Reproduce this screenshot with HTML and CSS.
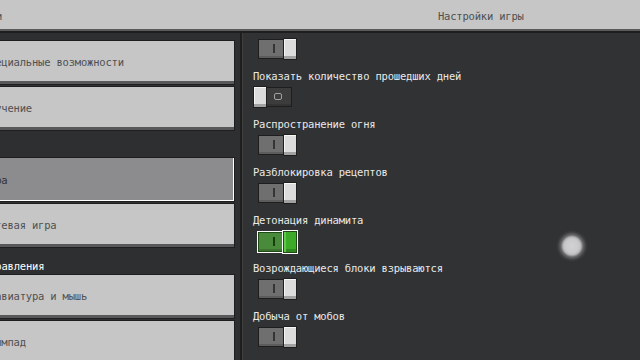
FILE: index.html
```html
<!DOCTYPE html>
<html lang="ru">
<head>
<meta charset="utf-8">
<title>Настройки игры</title>
<link rel="stylesheet" href="styles.css">
</head>
<body>
<div class="screen">
  <header class="topbar">
    <div class="topbar-left"><span class="back-title">Настройки</span></div>
    <div class="topbar-title">Настройки игры</div>
  </header>
  <div class="main">
    <nav class="sidebar">
      <div class="nav-list">
        <button class="nav-btn">Специальные возможности</button>
        <button class="nav-btn">Обучение</button>
        <div class="nav-section">Общие</div>
        <button class="nav-btn is-selected">Игра</button>
        <button class="nav-btn">Сетевая игра</button>
        <div class="nav-section">Элементы управления</div>
        <button class="nav-btn">Клавиатура и мышь</button>
        <button class="nav-btn">Геймпад</button>
      </div>
    </nav>
    <section class="content">
      <div class="options">
        <div class="option option-first">
          <div class="toggle is-on"><span class="toggle-track"><span class="mark-on"></span></span><span class="toggle-knob"></span></div>
        </div>
        <div class="option">
          <div class="option-label">Показать количество прошедших дней</div>
          <div class="toggle is-off"><span class="toggle-track"><span class="mark-off"></span></span><span class="toggle-knob"></span></div>
        </div>
        <div class="option">
          <div class="option-label">Распространение огня</div>
          <div class="toggle is-on"><span class="toggle-track"><span class="mark-on"></span></span><span class="toggle-knob"></span></div>
        </div>
        <div class="option">
          <div class="option-label">Разблокировка рецептов</div>
          <div class="toggle is-on"><span class="toggle-track"><span class="mark-on"></span></span><span class="toggle-knob"></span></div>
        </div>
        <div class="option">
          <div class="option-label">Детонация динамита</div>
          <div class="toggle is-on is-focused"><span class="toggle-track"><span class="mark-on"></span></span><span class="toggle-knob"></span></div>
        </div>
        <div class="option">
          <div class="option-label">Возрождающиеся блоки взрываются</div>
          <div class="toggle is-on"><span class="toggle-track"><span class="mark-on"></span></span><span class="toggle-knob"></span></div>
        </div>
        <div class="option">
          <div class="option-label">Добыча от мобов</div>
          <div class="toggle is-on"><span class="toggle-track"><span class="mark-on"></span></span><span class="toggle-knob"></span></div>
        </div>
      </div>
    </section>
  </div>
  <div class="cursor"></div>
</div>
</body>
</html>
```

FILE: styles.css
```css
html, body {
  margin: 0;
  padding: 0;
}

body {
  width: 640px;
  height: 360px;
  overflow: hidden;
  background: #313233;
  font-family: "DejaVu Sans Mono", "Liberation Mono", monospace;
  font-size: 10.5px;
  letter-spacing: -0.2px;
}

.screen {
  position: relative;
  width: 640px;
  height: 360px;
  overflow: hidden;
  display: flex;
  flex-direction: column;
}

/* ---------- top bar ---------- */
.topbar {
  flex: 0 0 auto;
  height: 33px;
  box-sizing: border-box;
  display: flex;
  background: #c6c6c6;
  border-bottom: 2px solid #1e1e1f;
  box-shadow: inset 0 -2px 0 #5a5a5b;
  color: #4f4f50;
  padding-top: 10px;
  line-height: 12px;
}

.topbar-left {
  width: 240px;
  overflow: hidden;
  white-space: nowrap;
}

.back-title {
  display: inline-block;
  margin-left: -53px;
}

.topbar-title {
  padding-left: 198px;
  white-space: nowrap;
}

/* ---------- main ---------- */
.main {
  flex: 1 1 auto;
  display: flex;
  min-height: 0;
}

.sidebar {
  width: 240px;
  flex: 0 0 240px;
  overflow: hidden;
  background: #2e2f30;
}

.nav-list {
  width: 335px;
  margin-left: -100px;
  padding-top: 7px;
  display: flex;
  flex-direction: column;
  gap: 1px;
}

.nav-btn {
  display: block;
  width: 100%;
  height: 45px;
  flex: 0 0 45px;
  margin: 0;
  box-sizing: border-box;
  border: 1px solid #1e1e1f;
  background: #c6c6c6;
  box-shadow: inset 0 -3px 0 #58585a;
  padding: 0 0 1px 82px;
  text-align: left;
  font: inherit;
  letter-spacing: inherit;
  line-height: 16px;
  color: #505051;
  white-space: nowrap;
}

.nav-btn.is-selected {
  background: #8c8b8d;
  box-shadow: inset -1px -1px 0 #ffffff;
  padding-bottom: 0;
  color: #323233;
}

.nav-section {
  height: 24px;
  flex: 0 0 24px;
  box-sizing: border-box;
  padding: 11px 0 0 28px;
  line-height: 13px;
  color: #ffffff;
  white-space: nowrap;
}

/* ---------- content ---------- */
.content {
  flex: 1 1 auto;
  overflow: hidden;
  border-left: 2px solid #1e1e1f;
  box-shadow: inset 1px 0 0 #3f3f40;
  padding-left: 11px;
  background: #313233;
}

.options {
  padding-top: 5px;
  display: flex;
  flex-direction: column;
}

.option {
  height: 48px;
  box-sizing: border-box;
}

.option-first {
  height: 30px;
}

.option-first .toggle {
  margin-top: 0;
}

.option-label {
  height: 16px;
  line-height: 16px;
  color: #e9e9e9;
  white-space: nowrap;
}

/* ---------- toggle ---------- */
.toggle {
  position: relative;
  width: 44px;
  height: 22px;
  margin-top: 2px;
}

.toggle-track {
  position: absolute;
  left: 5px;
  top: 1px;
  width: 34px;
  height: 20px;
  box-sizing: border-box;
  border: 1px solid #1e1e1f;
  background: #6f6f70;
  box-shadow: inset 0 -2px 0 #5c5c5d;
}

.toggle-knob {
  position: absolute;
  top: 0;
  width: 14px;
  height: 22px;
  box-sizing: border-box;
  border: 1px solid #1e1e1f;
  background: #dcdcdd;
  box-shadow: inset 0 -3px 0 #a2a2a3, inset 1px 1px 0 #f6f6f6;
}

.is-on .toggle-knob {
  left: 30px;
}

.is-off .toggle-knob {
  left: 0;
}

.is-off .toggle-track {
  background: #3c3c3d;
  box-shadow: inset 0 -2px 0 #333334;
}

.mark-on {
  position: absolute;
  left: 14px;
  top: 4px;
  width: 2px;
  height: 9px;
  background: #353536;
}

.mark-off {
  position: absolute;
  left: 15px;
  top: 5px;
  width: 8px;
  height: 7px;
  box-sizing: border-box;
  border: 1px solid #a2a2a3;
  border-radius: 2px;
}

/* focused (green) toggle */
.is-focused {
  margin-top: 3px;
}

.is-focused .toggle-track {
  background: #4a8a3b;
  border-color: #1f4a16;
  box-shadow: 0 0 0 1px #ffffff, inset 0 -2px 0 #3d7530;
}

.is-focused .toggle-knob {
  background: #3cab27;
  border-color: #1f4a16;
  box-shadow: 0 0 0 1px #ffffff, inset 2px 0 0 #62c84c, inset 0 -3px 0 #2f8a1f;
}

.is-focused .mark-on {
  background: #173d10;
}

/* ---------- pointer ---------- */
.cursor {
  position: absolute;
  left: 556px;
  top: 230px;
  width: 32px;
  height: 32px;
  border-radius: 50%;
  background: radial-gradient(circle, #d2d2d4 0, #c9c9cb 7px, #b4b4b6 9px, rgba(170, 170, 172, 0.45) 11px, rgba(120, 120, 122, 0.15) 14px, rgba(49, 50, 51, 0) 16px);
  pointer-events: none;
}
```
